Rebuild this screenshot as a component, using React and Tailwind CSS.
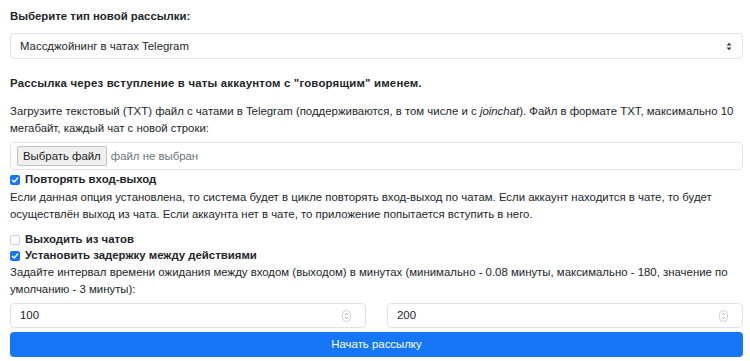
import { useState } from 'react';

function Check({ checked, onChange, label }) {
  return (
    <label className="flex items-center gap-[5px] font-bold cursor-pointer">
      <span
        onClick={onChange}
        className={
          checked
            ? 'w-[10px] h-[10px] rounded-[2px] bg-[#1677f6] flex items-center justify-center'
            : 'w-[10px] h-[10px] rounded-[2px] border border-[#c9ccd1] bg-white'
        }
      >
        {checked && (
          <svg width="8" height="8" viewBox="0 0 8 8">
            <path d="M1.4 4.2 L3.2 6 L6.6 2" fill="none" stroke="white" strokeWidth="1.4" strokeLinecap="round" strokeLinejoin="round" />
          </svg>
        )}
      </span>
      {label}
    </label>
  );
}

function Spinner() {
  return (
    <svg width="9" height="12" viewBox="0 0 9 12" className="opacity-60">
      <rect x="0.5" y="0.5" width="8" height="11" rx="4" fill="none" stroke="#9aa0a6" strokeWidth="0.8" />
      <path d="M2.8 5 L4.5 3.3 L6.2 5" fill="none" stroke="#6b7075" strokeWidth="1" />
      <path d="M2.8 7 L4.5 8.7 L6.2 7" fill="none" stroke="#6b7075" strokeWidth="1" />
    </svg>
  );
}

export default function App() {
  const [repeat, setRepeat] = useState(true);
  const [leave, setLeave] = useState(false);
  const [delay, setDelay] = useState(true);

  return (
    <div
      className="w-[750px] h-[361px] bg-white text-[#212529] text-[11.4px] leading-[17px] px-[10px] pt-[8px] overflow-hidden"
      style={{ fontFamily: '"Liberation Sans", Arial, sans-serif' }}
    >
      <div className="font-bold mb-[8px]">Выберите тип новой рассылки:</div>

      <div className="h-[26px] w-[733px] border border-[#dfe2e6] rounded-[4px] flex items-center justify-between pl-[9px] pr-[10px]">
        <span>Массджойнинг в чатах Telegram</span>
        <svg width="6" height="9" viewBox="0 0 6 9">
          <path d="M0.5 3.6 L3 0.8 L5.5 3.6 Z" fill="#343a40" />
          <path d="M0.5 5.4 L3 8.2 L5.5 5.4 Z" fill="#343a40" />
        </svg>
      </div>

      <div className="font-bold mt-[16px] tracking-[0.2px]">Рассылка через вступление в чаты аккаунтом с "говорящим" именем.</div>

      <p className="mt-[11px]">
        Загрузите текстовый (TXT) файл с чатами в Telegram (поддерживаются, в том числе и с <i>joinchat</i>). Файл в формате TXT, максимально 10 мегабайт, каждый чат с новой строки:
      </p>

      <div className="mt-[5px] h-[28px] w-[733px] border border-[#dfe2e6] rounded-[4px] flex items-center pl-[6px]">
        <span className="h-[20px] px-[5px] flex items-center bg-[#efefef] border border-[#c4c4c4] rounded-[2px] text-[#222]">Выбрать файл</span>
        <span className="ml-[4px] text-[#6c757d]">файл не выбран</span>
      </div>

      <div className="mt-[1px]">
        <Check checked={repeat} onChange={() => setRepeat(!repeat)} label="Повторять вход-выход" />
      </div>
      <p className="mt-[1px]">
        Если данная опция установлена, то система будет в цикле повторять вход-выход по чатам. Если аккаунт находится в чате, то будет осуществлён выход из чата. Если аккаунта нет в чате, то приложение попытается вступить в него.
      </p>

      <div className="mt-[8px]">
        <Check checked={leave} onChange={() => setLeave(!leave)} label="Выходить из чатов" />
      </div>
      <div className="mt-[-1px]">
        <Check checked={delay} onChange={() => setDelay(!delay)} label="Установить задержку между действиями" />
      </div>
      <p>
        Задайте интервал времени ожидания между входом (выходом) в минутах (минимально - 0.08 минуты, максимально - 180, значение по умолчанию - 3 минуты):
      </p>

      <div className="mt-[5px] grid grid-cols-2 gap-[21px] w-[733px]">
        <div className="h-[25px] border border-[#dfe2e6] rounded-[4px] flex items-center justify-between pl-[9px] pr-[14px]">
          <span>100</span>
          <Spinner />
        </div>
        <div className="h-[25px] border border-[#dfe2e6] rounded-[4px] flex items-center justify-between pl-[9px] pr-[14px]">
          <span>200</span>
          <Spinner />
        </div>
      </div>

      <button className="mt-[4px] h-[25px] w-[733px] bg-[#1677f6] text-white rounded-[4px] flex items-center justify-center">
        Начать рассылку
      </button>
    </div>
  );
}
